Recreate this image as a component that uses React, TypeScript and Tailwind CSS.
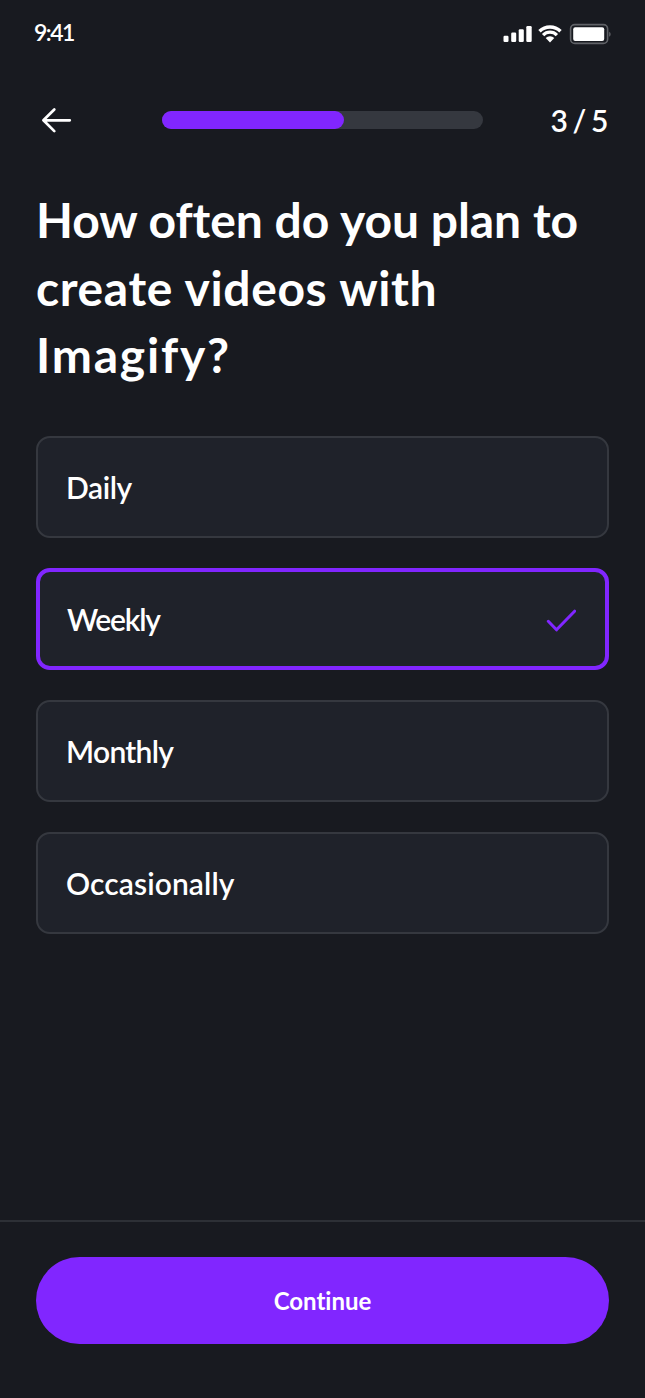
import { useState } from "react";

const options = [
  { label: "Daily", tracking: "tracking-[-0.4px]" },
  { label: "Weekly", tracking: "tracking-[-1.2px]" },
  { label: "Monthly", tracking: "tracking-[-0.7px]" },
  { label: "Occasionally", tracking: "tracking-[0.1px]" },
];

function StatusIcons() {
  return (
    <svg className="h-7 w-[109px]" viewBox="503 20 109 28" fill="none" aria-hidden="true">
      <g fill="#fff">
        <rect x="503.5" y="35.7" width="5" height="6.3" rx="1.2" />
        <rect x="511.2" y="32.6" width="5" height="9.4" rx="1.2" />
        <rect x="518.7" y="29.3" width="5.1" height="12.7" rx="1.2" />
        <rect x="526.3" y="26" width="5.4" height="16" rx="1.2" />
        <path d="M550 42.4 L545.7 38.1 A6.1 6.1 0 0 1 554.3 38.1 Z" />
        <rect x="573.2" y="27.2" width="31" height="13.8" rx="2" />
        <path d="M609 31.8 C611.3 32.6 611.3 36 609 36.8 Z" fill="#55575c" />
      </g>
      <path d="M539.5 31.3 A15.2 15.2 0 0 1 560.5 31.3" stroke="#fff" strokeWidth="3.5" />
      <path d="M543.1 35.1 A9.7 9.7 0 0 1 556.9 35.1" stroke="#fff" strokeWidth="3.3" />
      <rect x="570.6" y="24.6" width="37" height="18.8" rx="4.2" stroke="#606267" strokeWidth="1.6" />
    </svg>
  );
}

export default function App() {
  const [selected, setSelected] = useState("Weekly");

  return (
    <main className="flex h-[1398px] w-[645px] flex-col overflow-hidden bg-[#181a20] font-['Lato',sans-serif] text-white [font-variant-ligatures:none]">
      <div className="flex h-[66px] items-start justify-between pt-5 pr-[33px] pl-[34px]">
        <span className="-mt-px text-[23px] leading-[26px] font-semibold tracking-[-1.5px]">9:41</span>
        <StatusIcons />
      </div>

      <header className="flex h-[108px] items-center pr-[38px] pl-[36px]">
        <button aria-label="Back" className="w-[126px]">
          <svg className="size-10" viewBox="0 0 40 40" fill="none" stroke="#fff" strokeWidth="2.7" strokeLinecap="round" strokeLinejoin="round">
            <path d="M18.3 9.5 L7.4 20.3 L18.3 31.1 M7.4 20.3 H33.8" />
          </svg>
        </button>
        <div className="h-[18px] w-[321px] rounded-full bg-[#35383f]">
          <div className="h-full w-[182px] rounded-full bg-[#8126ff]" />
        </div>
        <span className="ml-auto text-[30px] leading-9 font-semibold tracking-[-1.4px]">3 / 5</span>
      </header>

      <h1 className="mt-3 px-[36px] text-[48px] leading-[67.6px] font-bold">
        <span className="block tracking-[-0.1px] whitespace-nowrap [word-spacing:0.4px]">How often do you plan to</span>
        <span className="block tracking-[0.6px] whitespace-nowrap [word-spacing:0.6px]">create videos with</span>
        <span className="block tracking-[1.8px] whitespace-nowrap">Imagify?</span>
      </h1>

      <div className="mt-[47px] flex flex-col gap-[30px] px-9">
        {options.map(({ label, tracking }) => (
          <button
            key={label}
            onClick={() => setSelected(label)}
            className={`flex h-[102px] items-center justify-between rounded-[14px] bg-[#1f222a] pr-[29px] text-left ${
              selected === label ? "border-4 border-[#8126ff] pl-[27px]" : "border-2 border-[#35383f] pl-[28px]"
            }`}
          >
            <span className={`text-[30px] leading-10 font-semibold ${tracking}`}>{label}</span>
            {selected === label && (
              <svg className="h-7 w-8" viewBox="0 0 32 28" fill="none" stroke="#8126ff" strokeWidth="3" strokeLinecap="round" strokeLinejoin="round">
                <path d="M4.3 16.3 L12.5 24.8 L30.6 6.2" />
              </svg>
            )}
          </button>
        ))}
      </div>

      <footer className="mt-auto h-[178px] border-t-2 border-[#2d3036] px-9 pt-[35px]">
        <button className="flex h-[87px] w-full items-center justify-center rounded-full bg-[#8126ff] text-[24px] font-bold">
          Continue
        </button>
      </footer>
    </main>
  );
}
